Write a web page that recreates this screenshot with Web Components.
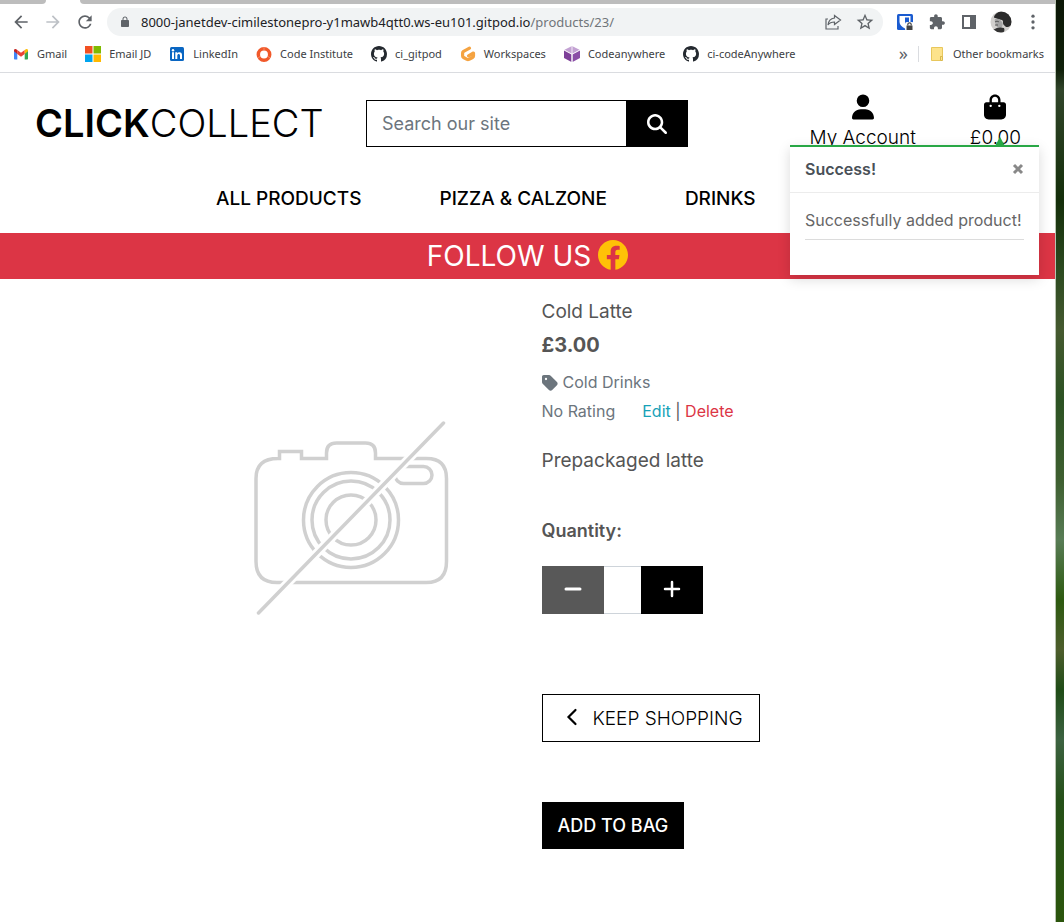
<!DOCTYPE html>
<html lang="en">
<head>
<meta charset="utf-8">
<title>Click Collect</title>
<style>
html, body { margin: 0; min-height: 100%; }
body { background: #fff; }
</style>
</head>
<body>
<desktop-view>
  <browser-chrome></browser-chrome>
  <shop-page></shop-page>
</desktop-view>

<script>
const ICONS = {
  back: ['0 0 24 24', '<path d="M20 11H7.83l5.59-5.59L12 4l-8 8 8 8 1.41-1.41L7.83 13H20z"/>'],
  forward: ['0 0 24 24', '<path d="M4 11h12.17l-5.59-5.59L12 4l8 8-8 8-1.41-1.41L16.17 13H4z"/>'],
  reload: ['0 0 24 24', '<path d="M17.65 6.35A7.958 7.958 0 0012 4c-4.42 0-7.99 3.58-7.99 8s3.57 8 7.99 8c3.73 0 6.84-2.55 7.73-6h-2.08A5.99 5.99 0 0112 18c-3.31 0-6-2.69-6-6s2.69-6 6-6c1.66 0 3.14.69 4.22 1.78L13 11h7V4z"/>'],
  lock: ['0 0 24 24', '<path d="M18 8h-1V6c0-2.76-2.24-5-5-5S7 3.24 7 6v2H6c-1.1 0-2 .9-2 2v10c0 1.1.9 2 2 2h12c1.1 0 2-.9 2-2V10c0-1.1-.9-2-2-2zM9 8V6c0-1.66 1.34-3 3-3s3 1.34 3 3v2z"/>'],
  share: ['0 0 20 20', '<path d="M5 7H3v10h12v-3M11.500 3.500l6 4.500-6 4.500V10c-3 0-5 .8-6.500 3 .4-4 2.500-6.500 6.500-7z" fill="none" stroke="currentColor" stroke-width="1.200"/>'],
  star: ['0 0 24 24', '<path d="M22 9.24l-7.19-.62L12 2 9.19 8.63 2 9.24l5.46 4.73L5.82 21 12 17.27 18.18 21l-1.63-7.03zM12 15.4l-3.76 2.27 1-4.28-3.32-2.88 4.38-.38L12 6.1l1.71 4.04 4.38.38-3.32 2.88 1 4.28z"/>'],
  vault: ['0 0 20 20', '<rect x="2" y="2" width="16" height="16" rx="1.500" fill="#1a5bd0"/><path d="M4.500 4h11v6c0 3-2.500 5-5.500 6.500C7 15 4.500 13 4.500 10z" fill="#fff"/><path d="M10 5.500h4V10c0 2-1.500 3.500-4 5z" fill="#1a5bd0"/><rect x="10" y="10" width="9" height="9" rx="2" fill="#fff"/><path d="M11.500 13.500h6V18h-6z" fill="#444"/><path d="M12.800 13.500v-1a1.700 1.700 0 013.400 0v1" fill="none" stroke="#444" stroke-width="1.200"/>'],
  puzzle: ['0 0 28 28', '<path transform="translate(2 2)" d="M20.5 11H19V7c0-1.100-.9-2-2-2h-4V3.5C13 2.120 11.880 1 10.5 1S8 2.120 8 3.5V5H4c-1.100 0-1.990.9-1.990 2v3.800H3.500c1.490 0 2.700 1.210 2.700 2.700s-1.210 2.700-2.700 2.700H2V20c0 1.100.9 2 2 2h3.800v-1.500c0-1.490 1.210-2.700 2.700-2.700 1.490 0 2.700 1.210 2.700 2.700V22H17c1.100 0 2-.9 2-2v-4h1.500c1.380 0 2.500-1.120 2.500-2.500S21.880 11 20.500 11z"/>'],
  panel: ['0 0 20 20', '<path d="M3 3h14v14H3zM5 5v10h6V5z" fill-rule="evenodd"/>'],
  avatar: ['0 0 22 22', '<clipPath id="c"><circle cx="11" cy="11" r="10.500"/></clipPath><g clip-path="url(#c)"><rect width="22" height="22" fill="#d2d0ce"/><path d="M4 6C6 0 14-1 18 2c5 4 5 10 2 13-2 2-5 1-6-1-2-2 0-4-2-5-3-1-5 0-6-2-1 0-2 0-2-1z" fill="#2b2b2b"/><path d="M5 8c2-1 5 0 6 2 2 1 2 4 1 6s-4 1-5 0c-1-3-3-5-2-8z" fill="#a5a5a5"/><path d="M5 11c1-1 3-1 4 0M5 14h3" fill="none" stroke="#555"/><path d="M3 19c4-3 8-3 11-2 1 2 0 4-1 5H4z" fill="#333"/></g>'],
  dots: ['0 0 24 24', '<circle cx="12" cy="5" r="2"/><circle cx="12" cy="12" r="2"/><circle cx="12" cy="19" r="2"/>'],
  gmail: ['0 0 16 16', '<path d="M1 4v8.500c0 .6.400 1 1 1h2.300V7.200z" fill="#4285f4"/><path d="M15 4v8.500c0 .6-.4 1-1 1h-2.300V7.200z" fill="#34a853"/><path d="M4.300 4v4L8 10.700 11.700 8V4L8 6.800z" fill="#ea4335"/><path d="M1 4.500v.8l3.300 2.600V4C2.500 2.200 1 2.800 1 4.500z" fill="#c5221f"/><path d="M15 4.500v.8l-3.300 2.600V4C13.500 2.200 15 2.800 15 4.500z" fill="#fbbc04"/>'],
  windows: ['0 0 16 16', '<path d="M0 0h7.500v7.500H0z" fill="#f25022"/><path d="M8.500 0H16v7.500H8.500z" fill="#7fba00"/><path d="M0 8.500h7.500V16H0z" fill="#00a4ef"/><path d="M8.500 8.500H16V16H8.500z" fill="#ffb900"/>'],
  linkedin: ['0 0 16 16', '<rect x="1" y="1" width="14" height="14" rx="1.500" fill="#0a66c2"/><path d="M3 6.300h2V13H3zM6.300 6.300h2v1c1-1.700 4.700-1.700 4.700 1.500V13h-2V9.500c0-2.200-2.700-2-2.700 0V13h-2z" fill="#fff"/><circle cx="4" cy="4.200" r="1.200" fill="#fff"/>'],
  ring: ['0 0 16 16', '<circle cx="8" cy="8.500" r="5.700" fill="none" stroke="#f1592a" stroke-width="3.500"/><path d="M8 1v3M2 12l2-1.500M14 12l-2-1.500" stroke="#f58a68" stroke-width="1"/>'],
  github: ['0 0 16 16', '<path d="M8 0C3.580 0 0 3.580 0 8c0 3.540 2.290 6.530 5.470 7.590.4.070.55-.17.55-.38 0-.19-.01-.82-.01-1.490-2.010.37-2.530-.49-2.690-.94-.09-.23-.48-.94-.82-1.130-.28-.15-.68-.52-.01-.53.63-.01 1.080.58 1.230.82.72 1.210 1.870.87 2.330.66.07-.52.28-.87.51-1.070-1.780-.2-3.640-.89-3.640-3.950 0-.87.31-1.590.82-2.150-.08-.2-.36-1.020.08-2.120 0 0 .67-.21 2.200.82.64-.18 1.320-.27 2-.27s1.360.09 2 .27c1.530-1.040 2.200-.82 2.200-.82.44 1.100.16 1.920.08 2.120.51.56.82 1.270.82 2.150 0 3.070-1.870 3.750-3.650 3.950.29.25.54.73.54 1.480 0 1.070-.01 1.930-.01 2.200 0 .21.15.46.55.38A8.010 8.010 0 0016 8c0-4.420-3.580-8-8-8z" fill="#24292f"/>'],
  gitpod: ['0 0 16 16', '<path d="M9.500 2.200L3.600 5.400c-.6.400-1 .9-1 1.600v3c0 .7.400 1.200 1 1.500L7 13.400c.6.300 1.300.3 2 0l3.500-1.900c.6-.3 1-.8 1-1.500V7L8.500 9.800" fill="none" stroke="#f5a341" stroke-width="3.200" stroke-linecap="round" stroke-linejoin="round"/>'],
  cube: ['0 0 16 16', '<path d="M8 0l7.500 3.800L8 7.800.5 3.800z" fill="#c3a2d3"/><path d="M0 4.600l7.500 4V16L0 12z" fill="#7d3f98"/><path d="M16 4.600l-7.500 4V16l7.500-4z" fill="#8a4da6"/><path d="M8 0v16" stroke="#fff" stroke-width=".8"/>'],
  folder: ['0 0 16 16', '<path d="M2.500 1.500h11v9h-2v4h-9z" fill="#fde38b" stroke="#e8c75c"/><path d="M11.500 14.500v-4h2v4z" fill="#fde38b" stroke="#d9b84d"/>'],
  search: ['0 0 512 512', '<path d="M416 208c0 45.900-14.900 88.300-40 122.700L502.600 457.400c12.500 12.500 12.500 32.800 0 45.300s-32.800 12.500-45.300 0L330.700 376c-34.400 25.200-76.800 40-122.700 40C93.100 416 0 322.900 0 208S93.100 0 208 0s208 93.100 208 208zM208 352a144 144 0 100-288 144 144 0 100 288z"/>'],
  user: ['0 0 448 512', '<path d="M224 256a128 128 0 100-256 128 128 0 100 256zm-45.700 48C79.800 304 0 383.800 0 482.300 0 498.700 13.300 512 29.700 512h388.600c16.400 0 29.700-13.300 29.700-29.700C448 383.800 368.200 304 269.700 304z"/>'],
  bag: ['0 0 448 512', '<path d="M160 112c0-35.300 28.700-64 64-64s64 28.700 64 64v48H160zm-48 48H48c-26.500 0-48 21.500-48 48v208c0 53 43 96 96 96h256c53 0 96-43 96-96V208c0-26.500-21.500-48-48-48h-64v-48C336 50.100 285.900 0 224 0S112 50.100 112 112zm24 48a24 24 0 110 48 24 24 0 110-48zm152 24a24 24 0 1148 0 24 24 0 11-48 0z"/>'],
  facebook: ['8 8 496 496', '<path d="M504 256C504 119 393 8 256 8S8 119 8 256c0 123.780 90.690 226.380 209.250 245V327.690h-63V256h63v-54.640c0-62.150 37-96.480 93.670-96.480 27.140 0 55.520 4.840 55.520 4.840v61h-31.280c-30.800 0-40.410 19.120-40.410 38.730V256h68.780l-11 71.690h-57.780V501C413.310 482.380 504 379.780 504 256z"/>'],
  tag: ['0 32 448 448', '<path d="M0 80v149.500c0 17 6.700 33.300 18.700 45.300l176 176c25 25 65.500 25 90.500 0l133.500-133.500c25-25 25-65.500 0-90.500l-176-176c-12-12-28.300-18.700-45.300-18.700H48C21.500 32 0 53.500 0 80zm112 32a32 32 0 110 64 32 32 0 110-64z"/>'],
  chevron: ['0 0 14 20', '<path d="M10.500 2L3.500 9l7 7" fill="none" stroke="currentColor" stroke-width="2.200" stroke-linecap="round"/>'],
  minus: ['0 0 20 20', '<path d="M3 9h14" stroke="currentColor" stroke-width="3" stroke-linecap="round"/>'],
  plus: ['0 0 20 20', '<path d="M3 9h14M10 2v14" stroke="currentColor" stroke-width="2.500" stroke-linecap="round"/>'],
  close: ['0 0 12 12', '<path d="M2 2l8 8M10 2l-8 8" stroke="currentColor" stroke-width="3"/>'],
  camera: ['0 0 220 220', '<g fill="none" stroke="#d0d0d0" stroke-width="3.500"><path d="M38 48.500h1.500v-7h22v7h25V43q0-10 10-10h29q10 0 10 10v5.500h51q20 0 20 20v83q0 21-20 21H37q-21 0-21-21v-83q0-20 22-20z"/><circle cx="111" cy="110" r="47.500"/><circle cx="111" cy="110" r="39"/><circle cx="111" cy="110" r="25"/><rect x="155" y="56.500" width="37" height="17" rx="8.500"/><path d="M204 12.500L18.500 203" stroke="#fff" stroke-width="9"/><path d="M203.500 13L18.500 203" stroke-linecap="round"/></g>']
};

class UiIcon extends HTMLElement {
  connectedCallback() {
    const [box, body] = ICONS[this.getAttribute('name')];
    this.attachShadow({ mode: 'open' }).innerHTML =
      `<style>:host{display:inline-flex;flex:none;width:16px;height:16px}svg{width:100%;height:100%;fill:currentColor}</style>
       <svg viewBox="${box}" aria-hidden="true">${body}</svg>`;
  }
}

function define(name, html) {
  const template = document.createElement('template');
  template.innerHTML = html;
  customElements.define(name, class extends HTMLElement {
    constructor() {
      super();
      this.attachShadow({ mode: 'open' }).append(template.content.cloneNode(true));
    }
  });
}

customElements.define('ui-icon', UiIcon);

define('desktop-view', `
<style>
  :host { display: grid; grid-template-columns: minmax(0, 1fr) 9px; min-height: 100vh; }
  .window { display: flex; flex-direction: column; background: #fff; }
  .wallpaper { border-left: 1px solid #b9c2b2; background: linear-gradient(#0b1606, #10200a 70px, #31452a 90px, #142e0a 200px, #2c4a20 270px, #45592f 330px, #2c5223 400px, #3e5f30 480px, #587c55 540px, #2d5a10 600px, #4d5d2c 650px, #1f4c17 690px, #3c6241 740px, #255018 800px, #2b550c 922px); }
</style>
<div class="window"><slot></slot></div><div class="wallpaper"></div>`);

define('bookmark-link', `
<style>
  :host { display: block; }
  a { display: flex; align-items: center; gap: 8px; color: #3c4043; text-decoration: none; white-space: nowrap; }
</style>
<a href="#"><slot name="icon"></slot><span><slot></slot></span></a>`);

define('browser-chrome', `
<style>
  :host { display: block; font-family: "Noto Sans", "Open Sans", sans-serif; color: #5f6368; border-bottom: 1px solid #dadce0; }
  .tabs { display: grid; grid-template-columns: 46px 34px 1fr; height: 4px; }
  .tabs i { background: #bdbdbd; }
  .tabs i:first-child { border-bottom-right-radius: 4px; }
  .tabs i:last-child { border-bottom-left-radius: 4px; }
  .toolbar { display: flex; align-items: center; gap: 12px; padding: 4px 12px 4px 11px; }
  button { display: flex; align-items: center; justify-content: center; border: 0; padding: 0; background: none; color: inherit; width: 20px; height: 20px; }
  button ui-icon { width: 20px; height: 20px; }
  button[disabled] { color: #bdc1c6; }
  .profile ui-icon { width: 22px; height: 22px; }
  .omnibox { flex: 1; display: flex; align-items: center; gap: 12px; height: 28px; padding: 0 8px 0 12px; border-radius: 14px; background: #f1f3f4; }
  .omnibox > ui-icon { width: 12px; height: 12px; }
  .url { flex: 1; margin-left: -2px; font-size: 13px; line-height: 20px; color: #202124; white-space: nowrap; outline: none; }
  .path { color: #70757a; }
  nav { display: flex; align-items: center; gap: 18px; height: 32px; box-sizing: border-box; padding: 0 11px 4px 13px; font-size: 11px; line-height: 16px; }
  .other { margin-left: auto; display: flex; align-items: center; gap: 10px; }
  .more { font-size: 18px; line-height: 16px; padding-bottom: 3px; }
  .other bookmark-link { border-left: 1px solid #dadce0; padding-left: 10px; }
</style>
<div class="tabs"><i></i><span></span><i></i></div>
<div class="toolbar">
  <button aria-label="Back"><ui-icon name="back"></ui-icon></button>
  <button aria-label="Forward" disabled><ui-icon name="forward"></ui-icon></button>
  <button aria-label="Reload"><ui-icon name="reload"></ui-icon></button>
  <div class="omnibox">
    <ui-icon name="lock"></ui-icon>
    <div class="url" role="textbox" aria-label="Address" contenteditable="true" spellcheck="false">8000-janetdev-cimilestonepro-y1mawb4qtt0.ws-eu101.gitpod.io<span class="path">/products/23/</span></div>
    <button aria-label="Share"><ui-icon name="share"></ui-icon></button>
    <button aria-label="Bookmark this page"><ui-icon name="star"></ui-icon></button>
  </div>
  <button aria-label="Password manager"><ui-icon name="vault"></ui-icon></button>
  <button aria-label="Extensions"><ui-icon name="puzzle"></ui-icon></button>
  <button aria-label="Side panel"><ui-icon name="panel"></ui-icon></button>
  <button class="profile" aria-label="Profile"><ui-icon name="avatar"></ui-icon></button>
  <button aria-label="Menu"><ui-icon name="dots"></ui-icon></button>
</div>
<nav aria-label="Bookmarks">
  <bookmark-link><ui-icon slot="icon" name="gmail"></ui-icon>Gmail</bookmark-link>
  <bookmark-link><ui-icon slot="icon" name="windows"></ui-icon>Email JD</bookmark-link>
  <bookmark-link><ui-icon slot="icon" name="linkedin"></ui-icon>LinkedIn</bookmark-link>
  <bookmark-link><ui-icon slot="icon" name="ring"></ui-icon>Code Institute</bookmark-link>
  <bookmark-link><ui-icon slot="icon" name="github"></ui-icon>ci_gitpod</bookmark-link>
  <bookmark-link><ui-icon slot="icon" name="gitpod"></ui-icon>Workspaces</bookmark-link>
  <bookmark-link><ui-icon slot="icon" name="cube"></ui-icon>Codeanywhere</bookmark-link>
  <bookmark-link><ui-icon slot="icon" name="github"></ui-icon>ci-codeAnywhere</bookmark-link>
  <div class="other">
    <span class="more">»</span>
    <bookmark-link><ui-icon slot="icon" name="folder"></ui-icon>Other bookmarks</bookmark-link>
  </div>
</nav>`);

define('site-header', `
<style>
  :host { display: block; color: #000; }
  .top { display: grid; grid-template-columns: 331px 322px 1fr; align-items: start; padding: 21px 34px 0 35px; }
  .logo { margin-top: 4px; font-size: 38px; line-height: 50px; font-weight: 300; color: #000; text-decoration: none; }
  .logo strong { font-weight: 600; }
  form { display: flex; height: 47px; margin-top: 6px; }
  input { flex: 1; min-width: 0; box-sizing: border-box; border: 1px solid #000; border-right: 0; border-radius: 0; padding: 0 15px; font: inherit; font-size: 18px; color: #495057; outline: none; }
  input::placeholder { color: #6c757d; opacity: 1; }
  form button { width: 62px; border: 0; padding: 0; background: #000; color: #fff; display: flex; align-items: center; justify-content: center; }
  form ui-icon { width: 20px; height: 20px; }
  .links { display: flex; justify-content: flex-end; gap: 54px; }
  .links a { display: flex; flex-direction: column; align-items: center; color: #000; text-decoration: none; font-size: 19px; line-height: 27px; font-weight: 300; }
  .links ui-icon { width: 22px; height: 26px; margin-bottom: 4px; }
  nav { display: flex; gap: 78px; padding: 36px 216px 22px; font-size: 19px; line-height: 24px; font-weight: 500; }
  nav a { color: #000; text-decoration: none; white-space: nowrap; }
  .banner { display: flex; align-items: center; justify-content: center; gap: 7px; height: 46px; background: #dc3545; color: #fff; font-size: 28px; line-height: 46px; text-decoration: none; }
  .banner ui-icon { width: 30px; height: 30px; padding-bottom: 2px; color: #ffc107; }
</style>
<div class="top">
  <a class="logo" href="#"><strong>CLICK</strong>COLLECT</a>
  <form><input type="text" placeholder="Search our site" aria-label="Search our site"><button type="button" aria-label="Search"><ui-icon name="search"></ui-icon></button></form>
  <div class="links">
    <a href="#"><ui-icon name="user"></ui-icon><span>My Account</span></a>
    <a href="#"><ui-icon name="bag"></ui-icon><span>£0.00</span></a>
  </div>
</div>
<nav aria-label="Shop"><a href="#">ALL PRODUCTS</a><a href="#">PIZZA &amp; CALZONE</a><a href="#">DRINKS</a></nav>
<a class="banner" href="#"><span>FOLLOW US</span><ui-icon name="facebook"></ui-icon></a>`);

define('product-detail', `
<style>
  :host { display: grid; grid-template-columns: 1fr 1fr; color: #555; font-size: 19px; line-height: 27px; }
  .picture { padding: 131px 0 0 172px; display: flex; justify-content: center; align-items: flex-start; }
  .picture ui-icon { width: 220px; height: 220px; }
  .info { padding: 19px 14px 0; }
  p { margin: 0; }
  .price { margin-top: 7px; font-size: 20px; font-weight: 700; }
  .category { display: flex; align-items: center; gap: 5px; margin-top: 10px; font-size: 16px; color: #6c757d; }
  .meta { display: flex; gap: 27px; margin-top: 2px; font-size: 16px; }
  .meta > span:first-child { color: #6c757d; }
  .edit { color: #17a2b8; text-decoration: none; }
  .delete { color: #dc3545; text-decoration: none; }
  .description { margin-top: 22px; }
  label { display: block; margin-top: 43px; font-size: 18px; font-weight: 600; }
  .stepper { display: flex; margin-top: 22px; height: 48px; }
  .stepper button { width: 62px; border: 0; padding: 0; background: #000; color: #fff; display: flex; align-items: center; justify-content: center; }
  .stepper button[disabled] { background: #585858; }
  .stepper ui-icon { width: 20px; height: 20px; }
  .stepper input { width: 37px; box-sizing: border-box; border: solid #ced4da; border-width: 1px 0; border-radius: 0; font: inherit; text-align: center; appearance: textfield; }
  .keep { display: inline-flex; align-items: center; gap: 14px; margin-top: 80px; height: 48px; box-sizing: border-box; border: 1px solid #000; padding: 0 16px 0 22px; color: #000; text-decoration: none; font-weight: 300; }
  .keep ui-icon { width: 14px; height: 20px; }
  .add { display: block; margin-top: 60px; height: 47px; border: 0; padding: 0 16px; background: #000; color: #fff; font: inherit; font-size: 18px; font-weight: 500; }
</style>
<div class="picture"><ui-icon name="camera" role="img" aria-label="No image"></ui-icon></div>
<div class="info">
  <p>Cold Latte</p>
  <p class="price">£3.00</p>
  <p class="category"><ui-icon name="tag"></ui-icon><span>Cold Drinks</span></p>
  <p class="meta"><span>No Rating</span><span><a class="edit" href="#">Edit</a> | <a class="delete" href="#">Delete</a></span></p>
  <p class="description">Prepackaged latte</p>
  <label for="qty">Quantity:</label>
  <div class="stepper">
    <button type="button" aria-label="Decrease" disabled><ui-icon name="minus"></ui-icon></button>
    <input id="qty" type="number">
    <button type="button" aria-label="Increase"><ui-icon name="plus"></ui-icon></button>
  </div>
  <a class="keep" href="#"><ui-icon name="chevron"></ui-icon><span>KEEP SHOPPING</span></a>
  <button class="add" type="button">ADD TO BAG</button>
</div>`);

define('toast-message', `
<style>
  :host { display: block; position: relative; box-sizing: border-box; background: #fff; border-top: 2px solid #28a745; box-shadow: 0 4px 12px rgba(0, 0, 0, .15); font-size: 16px; line-height: 24px; color: #666; }
  .arrow { position: absolute; right: 34px; top: -10px; border: solid transparent; border-width: 0 5px 9px; border-bottom-color: #28a745; }
  header { display: flex; align-items: center; justify-content: space-between; padding: 10px 15px 11px; border-bottom: 1px solid #ececec; color: #495057; }
  strong { font-weight: 600; }
  button { display: flex; border: 0; padding: 0; background: none; color: #888; }
  button ui-icon { width: 12px; height: 12px; }
  .body { padding: 15px 15px 35px; }
  p { margin: 0; padding-bottom: 7px; border-bottom: 1px solid #dcdcdc; white-space: nowrap; }
</style>
<span class="arrow"></span>
<header><strong><slot name="title"></slot></strong><button type="button" aria-label="Close"><ui-icon name="close"></ui-icon></button></header>
<div class="body"><p><slot></slot></p></div>`);

define('shop-page', `
<style>
  :host { display: block; position: relative; flex: 1; font-family: Inter, "Liberation Sans", sans-serif; }
  toast-message { position: absolute; top: 72px; right: 16px; width: 249px; }
</style>
<site-header></site-header>
<product-detail></product-detail>
<toast-message role="status"><span slot="title">Success!</span>Successfully added product!</toast-message>`);
</script>
</body>
</html>
